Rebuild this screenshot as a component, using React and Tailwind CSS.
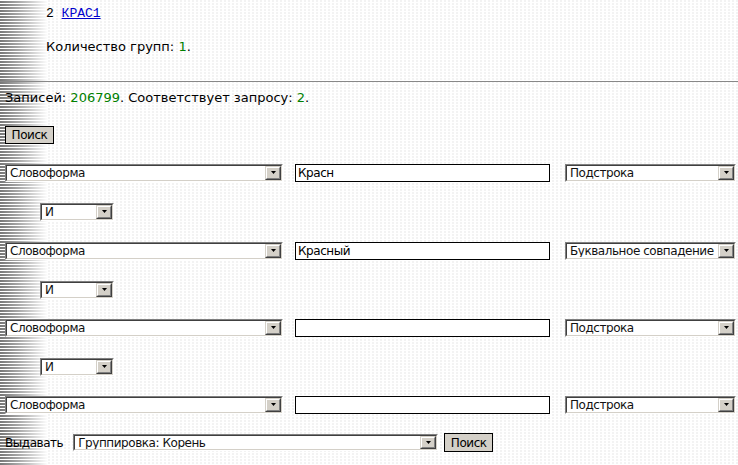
import React from 'react';

const Arrow = () => (
  <div className="h-full w-[16px] shrink-0 border border-t-[#d4d0c8] border-l-[#d4d0c8] border-r-[#404040] border-b-[#404040]">
    <div className="flex h-full w-full items-center justify-center border border-t-white border-l-white border-r-[#808080] border-b-[#808080] bg-[#d4d0c8]">
      <svg width="5" height="3" viewBox="0 0 5 3">
        <polygon points="0,0 5,0 2.5,3" fill="#000" />
      </svg>
    </div>
  </div>
);

const Select = ({ className, text }) => (
  <div className={`${className} shrink-0 border border-t-[#808080] border-l-[#808080] border-r-white border-b-white`}>
    <div className="flex h-full items-center border border-t-[#404040] border-l-[#404040] border-r-[#d4d0c8] border-b-[#d4d0c8] bg-white">
      <span className="min-w-0 flex-1 overflow-hidden whitespace-nowrap pl-[3px] text-[12px] leading-none tracking-[-0.45px] text-[#111]">{text}</span>
      <Arrow />
    </div>
  </div>
);

const Button = ({ className, children }) => (
  <button className={`${className} shrink-0 border border-black bg-[#d4d0c8] text-[12px] leading-none tracking-[-0.45px] text-black`}>
    {children}
  </button>
);

const Row = ({ className, value, mode }) => (
  <div className={`${className} flex h-[18px] items-center pl-[5px]`}>
    <Select className="h-[18px] w-[278px]" text="Словоформа" />
    <div className="ml-[12px] flex h-[18px] w-[255px] shrink-0 items-center border border-black bg-white px-[2px] text-[12px] leading-none tracking-[-0.45px] text-black">
      {value}
    </div>
    <Select className="ml-[15px] h-[18px] w-[171px]" text={mode} />
  </div>
);

const AndSelect = () => (
  <div className="mt-[21px] pl-[40px]">
    <Select className="h-[18px] w-[74px]" text="И" />
  </div>
);

export default function App() {
  return (
    <div className="min-h-screen bg-white font-['DejaVu_Sans',sans-serif] text-[13px] text-black [background:linear-gradient(to_right,rgba(255,255,255,0)_0px,rgba(255,255,255,0.35)_18px,#fff_48px)_0_0/48px_100%_no-repeat,repeating-linear-gradient(to_bottom,#fff_0_1px,#777_1px_3px)_0_0/48px_100%_no-repeat,radial-gradient(circle_at_1px_1px,#f3f3f3_0.8px,transparent_1px)_0_0/4px_3px,#fff]">
      <div className="pl-[46px] pt-[6px] font-['Liberation_Mono',monospace] text-[13px] leading-[16px]">
        2 <a href="#" className="text-[#0000cc] underline">КРАС1</a>
      </div>

      <div className="mt-[17px] pl-[46px] leading-[15px]">
        Количество групп: <span className="text-[#008000]">1</span>.
      </div>

      <div className="mt-[27px] border-t border-[#888]" />

      <div className="mt-[8px] pl-[5px] leading-[15px]">
        Записей: <span className="text-[#008000]">206799</span>. Соответствует запросу: <span className="text-[#008000]">2</span>.
      </div>

      <div className="mt-[20px] pl-[5px]">
        <Button className="h-[18px] w-[49px]">Поиск</Button>
      </div>

      <Row className="mt-[19px]" value="Красн" mode="Подстрока" />
      <AndSelect />
      <Row className="mt-[21px]" value="Красный" mode="Буквальное совпадение" />
      <AndSelect />
      <Row className="mt-[20px]" value="" mode="Подстрока" />
      <AndSelect />
      <Row className="mt-[20px]" value="" mode="Подстрока" />

      <div className="mt-[20px] flex h-[18px] items-center pl-[5px]">
        <span className="text-[12px] leading-none tracking-[-0.45px]">Выдавать</span>
        <Select className="ml-[10px] h-[17px] w-[365px]" text="Группировка: Корень" />
        <Button className="ml-[6px] h-[19px] w-[49px]">Поиск</Button>
      </div>
    </div>
  );
}
